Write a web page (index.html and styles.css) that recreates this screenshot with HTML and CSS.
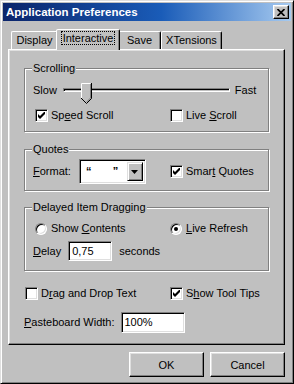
FILE: index.html
```html
<!DOCTYPE html>
<html lang="en">
<head>
  <meta charset="UTF-8" />
  <title>Application Preferences</title>
  <link rel="stylesheet" href="styles.css">
</head>
<body>

  <div class="window">
    <div class="titlebar">
      <span class="title">Application Preferences</span>
      <button class="close" type="button">
        <svg width="8" height="7" viewBox="0 0 8 7"><path d="M0.5 0 L7.5 7 M7.5 0 L0.5 7" stroke="#000" stroke-width="1.7" /></svg>
      </button>
    </div>

    <div class="dialog">
      <div class="tabs">
        <div class="tab tab-display">Display</div>
        <div class="tab tab-active"><span class="focus">Interactive</span></div>
        <div class="tab tab-save">Save</div>
        <div class="tab tab-ext">XTensions</div>
      </div>

      <div class="panel">
        <fieldset class="group group-scroll">
          <legend>Scrolling</legend>
          <div class="slider-row">
            <span>Slow</span>
            <div class="track">
              <svg class="thumb" width="11" height="21" viewBox="0 0 11 21">
                <path d="M0.5 15.5 V0.5 H10.5 V15.5 L5.5 20.5 Z" fill="#c0c0c0" stroke="none" />
                <path d="M0.5 15.5 V0.5 H9.5" fill="none" stroke="#fff" />
                <path d="M10.5 0 V15.5 L5.5 20.5 L0 15" fill="none" stroke="#000" />
                <path d="M9.5 1 V15 L5.5 19" fill="none" stroke="#808080" />
              </svg>
            </div>
            <span>Fast</span>
          </div>
          <div class="opts">
            <label class="opt"><span class="check on"></span><span>Sp<u>e</u>ed Scroll</span></label>
            <label class="opt"><span class="check"></span><span>Live <u>S</u>croll</span></label>
          </div>
        </fieldset>

        <fieldset class="group group-quotes">
          <legend>Quotes</legend>
          <div class="opts quotes-row">
            <div class="format">
              <span><u>F</u>ormat:</span>
              <div class="combo">
                <span class="combo-value">“&nbsp;&nbsp;&nbsp;&nbsp;&nbsp;&nbsp;&nbsp;”</span>
                <span class="combo-btn">
                  <svg width="7" height="4" viewBox="0 0 7 4"><path d="M0 0 H7 L3.5 4 Z" fill="#000" /></svg>
                </span>
              </div>
            </div>
            <label class="opt"><span class="check on"></span><span>Smar<u>t</u> Quotes</span></label>
          </div>
        </fieldset>

        <fieldset class="group group-drag">
          <legend>Delayed Item Dragging</legend>
          <div class="opts">
            <label class="opt"><span class="radio"></span><span>Show <u>C</u>ontents</span></label>
            <label class="opt"><span class="radio on"></span><span><u>L</u>ive Refresh</span></label>
          </div>
          <div class="delay-row">
            <span><u>D</u>elay</span>
            <div class="field delay-field">0,75</div>
            <span>seconds</span>
          </div>
        </fieldset>

        <div class="opts bottom-opts">
          <label class="opt"><span class="check"></span><span>D<u>r</u>ag and Drop Text</span></label>
          <label class="opt"><span class="check on"></span><span>S<u>h</u>ow Tool Tips</span></label>
        </div>

        <div class="paste-row">
          <span><u>P</u>asteboard Width:</span>
          <div class="field paste-field">100%</div>
        </div>
      </div>

      <div class="buttons">
        <button class="btn" type="button">OK</button>
        <button class="btn" type="button">Cancel</button>
      </div>
    </div>
  </div>

</body>
</html>
```

FILE: styles.css
```css
* {
  box-sizing: border-box;
}

body {
  margin: 0;
  background-color: #c0c0c0;
  font-family: "Liberation Sans", Arial, sans-serif;
  font-size: 11px;
  line-height: 13px;
  color: #000;
}

.window {
  width: 294px;
  height: 384px;
  padding: 2px;
  border: 1px solid;
  border-color: #dfdfdf #000 #000 #dfdfdf;
  box-shadow: inset 1px 1px #fff, inset -1px -1px #808080;
  display: flex;
  flex-direction: column;
}

.titlebar {
  height: 18px;
  padding: 0 2px 0 3px;
  display: flex;
  align-items: center;
  justify-content: space-between;
  background: linear-gradient(90deg, #0a246a, #1a5cb8 55%, #a6caf0);
}

.title {
  color: #fff;
  font-weight: bold;
  font-size: 11.5px;
}

.close {
  width: 16px;
  height: 14px;
  padding: 0;
  background-color: #c0c0c0;
  border: 1px solid;
  border-color: #fff #000 #000 #fff;
  box-shadow: inset -1px -1px #808080, inset 1px 1px #dfdfdf;
  display: flex;
  align-items: center;
  justify-content: center;
}

.dialog {
  flex: 1;
  padding: 8px 6px 0 5px;
  display: flex;
  flex-direction: column;
}

/* tab strip */
.tabs {
  height: 20px;
  padding-left: 3px;
  display: flex;
  align-items: flex-end;
}

.tab {
  height: 18px;
  padding-top: 2px;
  text-align: center;
  border: 1px solid;
  border-bottom: none;
  border-color: #fff #000 transparent #fff;
  border-radius: 2px 2px 0 0;
  box-shadow: inset -1px 0 #808080;
}

.tab-display { width: 47px; }
.tab-save { width: 43px; }
.tab-ext { width: 61px; }

.tab-active {
  position: relative;
  z-index: 1;
  width: 64px;
  height: 21px;
  margin: 0 -2px -1px;
  padding-top: 2px;
  background-color: #c0c0c0;
}

.focus {
  padding: 0 1px;
  outline: 1px dotted #000;
}

/* page */
.panel {
  height: 296px;
  padding: 0 15px;
  border: 1px solid;
  border-color: #fff #000 #000 #fff;
  box-shadow: inset -1px -1px #808080, inset 1px 1px #dfdfdf;
}

.group {
  margin: 0;
  padding: 0 0 0 7px;
  border: 1px solid #808080;
  box-shadow: 1px 1px #fff, inset 1px 1px #fff;
}

.group legend {
  padding: 0 1px;
  background-color: #c0c0c0;
}

.group-scroll {
  margin-top: 12px;
  padding-bottom: 9px;
}

.group-quotes {
  margin-top: 11px;
  padding-bottom: 6px;
}

.group-drag {
  margin-top: 10px;
  padding-bottom: 9px;
}

.slider-row {
  height: 14px;
  margin-top: 8px;
  padding-left: 1px;
  display: flex;
  align-items: center;
}

.track {
  position: relative;
  width: 167px;
  height: 4px;
  margin: 0 5px 0 6px;
  border: 1px solid;
  border-color: #808080 #fff #fff #808080;
  box-shadow: inset 1px 1px #000;
}

.thumb {
  position: absolute;
  left: 17px;
  top: -6px;
}

.opts {
  padding-left: 3px;
  display: grid;
  grid-template-columns: 135px 1fr;
  align-items: center;
}

.group-scroll .opts {
  margin-top: 12px;
}

.group-drag .opts {
  margin-top: 8px;
}

.opt {
  display: flex;
  align-items: center;
  white-space: nowrap;
}

.check,
.radio {
  width: 13px;
  height: 13px;
  flex: none;
  margin-right: 3px;
  background-color: #fff;
  border: 1px solid;
  border-color: #808080 #fff #fff #808080;
  box-shadow: inset 1px 1px #000, inset -1px -1px #dfdfdf;
}

.check.on {
  background: #fff url("data:image/svg+xml,%3Csvg xmlns='http://www.w3.org/2000/svg' width='7' height='7'%3E%3Cpath d='M0 2 L2 4 L7 -1 L7 2 L2 7 L0 5 Z' fill='%23000'/%3E%3C/svg%3E") no-repeat 2px 2px;
}

.radio {
  width: 12px;
  height: 12px;
  margin-right: 4px;
  border-radius: 50%;
  display: flex;
  align-items: center;
  justify-content: center;
}

.radio.on::after {
  content: "";
  width: 4px;
  height: 4px;
  border-radius: 50%;
  background-color: #000;
}

.quotes-row {
  margin-top: 3px;
  padding-left: 1px;
  grid-template-columns: 137px 1fr;
}

.format {
  display: flex;
  align-items: center;
  gap: 8px;
}

.combo {
  width: 67px;
  height: 25px;
  padding: 2px;
  background-color: #fff;
  border: 1px solid;
  border-color: #808080 #fff #fff #808080;
  box-shadow: inset 1px 1px #000, inset -1px -1px #dfdfdf;
  display: flex;
  justify-content: space-between;
}

.combo-value {
  padding: 3px 0 0 4px;
  font-weight: bold;
}

.combo-btn {
  width: 16px;
  background-color: #c0c0c0;
  border: 1px solid;
  border-color: #dfdfdf #000 #000 #dfdfdf;
  box-shadow: inset 1px 1px #fff, inset -1px -1px #808080;
  display: flex;
  align-items: center;
  justify-content: center;
}

.field {
  padding: 3px 0 0 3px;
  background-color: #fff;
  border: 1px solid;
  border-color: #808080 #fff #fff #808080;
  box-shadow: inset 1px 1px #000, inset -1px -1px #dfdfdf;
}

.delay-row {
  margin-top: 6px;
  padding-left: 1px;
  display: flex;
  align-items: center;
}

.delay-field {
  width: 44px;
  height: 20px;
  margin: 0 7px 0 7px;
}

.bottom-opts {
  margin-top: 16px;
  padding-left: 1px;
  grid-template-columns: 145px 1fr;
}

.paste-row {
  margin-top: 12px;
  display: flex;
  align-items: center;
  gap: 6px;
}

.paste-field {
  width: 64px;
  height: 21px;
}

.buttons {
  margin-top: 7px;
  display: flex;
  justify-content: flex-end;
  gap: 6px;
}

.btn {
  width: 75px;
  height: 25px;
  padding: 0;
  font-family: inherit;
  font-size: 11px;
  background-color: #c0c0c0;
  border: 1px solid;
  border-color: #fff #000 #000 #fff;
  box-shadow: inset -1px -1px #808080, inset 1px 1px #dfdfdf;
}
```
